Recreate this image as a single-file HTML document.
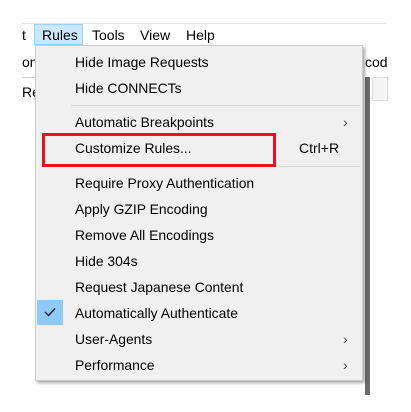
<!DOCTYPE html><html><head><style>
body{margin:0;width:411px;height:412px;background:#fff;position:relative;overflow:hidden;font-family:"Liberation Sans",sans-serif;font-size:14px;color:#000}
.a{position:absolute}
.it{position:absolute;left:75px;line-height:16px;font-size:13.9px}
.ar{position:absolute;left:343px;color:#444;font-size:14px}
</style></head><body>
<div class="a" style="left:22px;top:23px;width:364px;height:1px;background:#e4e4e4"></div>
<div class="a" style="left:34px;top:24px;width:49px;height:21px;background:#cce8ff;border:1px solid #99d1ff;box-sizing:border-box"></div>
<div class="a" style="left:22px;top:27px">t</div>
<div class="a" style="left:42px;top:27px">Rules</div>
<div class="a" style="left:92px;top:27px">Tools</div>
<div class="a" style="left:140px;top:27px">View</div>
<div class="a" style="left:186px;top:27px">Help</div>
<div class="a" style="left:22px;top:77px;width:14px;height:1px;background:#ccc"></div>
<div class="a" style="left:22px;top:54px">on</div>
<div class="a" style="left:365px;top:54px">cod</div>
<div class="a" style="left:22px;top:84px">Re</div>
<div class="a" style="left:365px;top:77px;width:5px;height:318px;background:#6b6b6b"></div>
<div class="a" style="left:372px;top:77px;width:14px;height:22px;background:#f4f4f4;border:1px solid #ddd"></div>
<div class="a" style="left:35px;top:45px;width:328px;height:336px;background:#f0f0f0;border:1px solid #ccc;box-sizing:border-box;box-shadow:2px 2px 3px rgba(0,0,0,.35)"></div>
<div class="a" style="left:71px;top:105px;width:289px;height:1px;background:#d7d7d7"></div>
<div class="a" style="left:71px;top:166px;width:289px;height:1px;background:#d7d7d7"></div>
<div class="it" style="top:54px">Hide Image Requests</div>
<div class="it" style="top:80px">Hide CONNECTs</div>
<div class="it" style="top:114px">Automatic Breakpoints</div><div class="ar" style="top:114px">›</div>
<div class="it" style="top:140px">Customize Rules...</div><div class="a" style="left:299px;top:140px">Ctrl+R</div>
<div class="a" style="left:42px;top:133px;width:234px;height:34px;border:3px solid #e81123;box-sizing:border-box"></div>
<div class="it" style="top:175px">Require Proxy Authentication</div>
<div class="it" style="top:201px">Apply GZIP Encoding</div>
<div class="it" style="top:227px">Remove All Encodings</div>
<div class="it" style="top:253px">Hide 304s</div>
<div class="it" style="top:279px">Request Japanese Content</div>
<div class="a" style="left:37px;top:300px;width:26px;height:25px;background:#90c8f6"></div>
<svg class="a" style="left:43px;top:306px" width="14" height="12"><path d="M2 6 L5.5 9.5 L12 2.5" stroke="#222" stroke-width="1.4" fill="none"/></svg>
<div class="it" style="top:305px">Automatically Authenticate</div>
<div class="it" style="top:331px">User-Agents</div><div class="ar" style="top:331px">›</div>
<div class="it" style="top:357px">Performance</div><div class="ar" style="top:357px">›</div>
</body></html>
